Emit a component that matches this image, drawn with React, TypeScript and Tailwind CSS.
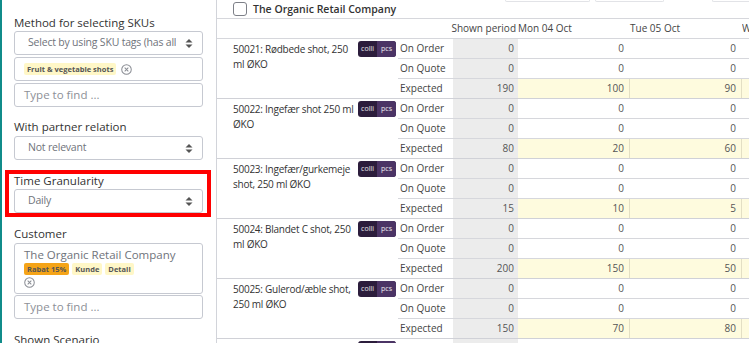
import React from "react";

const groups = [
  { name: ["50021: Rødbede shot, 250", "ml ØKO"], exp: [190, 100, 90] },
  { name: ["50022: Ingefær shot 250 ml", "ØKO"], exp: [80, 20, 60] },
  { name: ["50023: Ingefær/gurkemeje", "shot, 250 ml ØKO"], exp: [15, 10, 5] },
  { name: ["50024: Blandet C shot, 250", "ml ØKO"], exp: [200, 150, 50] },
  { name: ["50025: Gulerod/æble shot,", "250 ml ØKO"], exp: [150, 70, 80] },
  { name: ["50026: Æble/ingefær shot,", "250 ml ØKO"], exp: [120, 60, 60] },
];

function Caret() {
  return (
    <svg width="8" height="11" viewBox="0 0 8 11" className="shrink-0">
      <path d="M4 1 L7.5 4.5 H0.5 Z" fill="#555" />
      <path d="M4 10 L7.5 6.5 H0.5 Z" fill="#555" />
    </svg>
  );
}

function CircleX() {
  return (
    <svg width="11" height="11" viewBox="0 0 12 12" className="shrink-0">
      <circle cx="6" cy="6" r="5.2" fill="none" stroke="#8a8d94" strokeWidth="1.1" />
      <path d="M4 4 L8 8 M8 4 L4 8" stroke="#8a8d94" strokeWidth="1.1" />
    </svg>
  );
}

function Select({ text }: { text: string }) {
  return (
    <div className="h-[24px] border border-[#c6c9d1] rounded-[3px] flex items-center pl-[13px] pr-[9px] gap-[9px]">
      <span className="flex-1 overflow-hidden whitespace-nowrap text-[10.5px] tracking-[-0.2px] text-[#6f737b]">{text}</span>
      <Caret />
    </div>
  );
}

function Finder() {
  return (
    <div className="h-[24px] border border-[#c6c9d1] rounded-[3px] flex items-center pl-[9px] text-[11.5px] text-[#8d9097]">
      Type to find ...
    </div>
  );
}

function Label({ children }: { children: React.ReactNode }) {
  return <div className="text-[11.5px] leading-[14px] text-[#333]">{children}</div>;
}

function Tag({ children, orange }: { children: React.ReactNode; orange?: boolean }) {
  return (
    <span
      className={`px-[3px] h-[12px] leading-[12px] rounded-[2px] text-[7.5px] font-bold text-[#555] ${
        orange ? "bg-[#f5a418]" : "bg-[#fff7c7]"
      }`}
    >
      {children}
    </span>
  );
}

function Sidebar() {
  return (
    <aside className="w-[217px] shrink-0 h-full border-l-2 border-l-[#108c8a] border-r border-r-[#d2d4da] pl-[12px] pr-[13px] pt-[16px] flex flex-col">
      <Label>Method for selecting SKUs</Label>
      <div className="mt-[1px] flex flex-col gap-[2px]">
        <Select text="Select by using SKU tags (has all tags)" />
        <div className="h-[24px] border border-[#c6c9d1] rounded-[3px] flex items-center pl-[9px] gap-[5px]">
          <Tag>Fruit &amp; vegetable shots</Tag>
          <CircleX />
        </div>
        <Finder />
      </div>
      <div className="mt-[13px]">
        <Label>With partner relation</Label>
        <div className="mt-[2px]">
          <Select text="Not relevant" />
        </div>
      </div>
      <div className="mt-[10px] -ml-[9px] -mr-[8px] border-4 border-[#ff0000] pl-[5px] pr-[4px]">
        <Label>Time Granularity</Label>
        <div className="mt-[1px]">
          <Select text="Daily" />
        </div>
      </div>
      <div className="mt-[10px]">
        <Label>Customer</Label>
        <div className="mt-[2px] h-[51px] border border-[#c6c9d1] rounded-[3px] pl-[9px] pt-[3px] flex flex-col">
          <div className="text-[11.5px] leading-[16px] text-[#6f737b]">The Organic Retail Company</div>
          <div className="flex gap-[3px]">
            <Tag orange>Rabat 15%</Tag>
            <Tag>Kunde</Tag>
            <Tag>Detail</Tag>
          </div>
          <div className="mt-[2px]">
            <CircleX />
          </div>
        </div>
        <div className="mt-[1px]">
          <Finder />
        </div>
      </div>
      <div className="mt-[14px]">
        <Label>Shown Scenario</Label>
      </div>
    </aside>
  );
}

function Badge() {
  return (
    <div className="h-[16px] w-[38px] shrink-0 rounded-[3px] bg-[#2c1d3c] flex text-[7px] text-white/90 overflow-hidden">
      <span className="w-[19px] flex items-center justify-center">colli</span>
      <span className="flex-1 bg-[#4b3465] flex items-center justify-center">pcs</span>
    </div>
  );
}

function Row({ label, vals, exp, last }: { label: string; vals: number[]; exp?: boolean; last?: boolean }) {
  return (
    <div className={`flex text-[10px] text-[#555] ${last ? "h-[19px]" : "h-[20px] border-b border-[#d6d7dc]"}`}>
      <div className="w-[55px] pl-[2px] flex items-center text-[#444]">{label}</div>
      <div className="w-[65px] bg-[#ececec] pr-[4px] flex items-center justify-end">{vals[0]}</div>
      <div className={`w-[112px] pr-[5px] flex items-center justify-end border-r ${exp ? "bg-[#fefbde] border-[#e3dfc4]" : "border-transparent"}`}>
        {vals[1]}
      </div>
      <div className={`w-[112px] pr-[5px] flex items-center justify-end border-r ${exp ? "bg-[#fefbde] border-[#e3dfc4]" : "border-transparent"}`}>
        {vals[2]}
      </div>
      <div className={`flex-1 ${exp ? "bg-[#fefbde]" : ""}`}></div>
    </div>
  );
}

function Group({ name, exp }: { name: string[]; exp: number[] }) {
  return (
    <div className="flex border-b border-[#d0d1d7]">
      <div className="w-[181px] shrink-0 pl-[16px] pt-[2px] flex">
        <div className="w-[125px] text-[10px] tracking-[-0.25px] leading-[15px] text-[#333] pt-[1px] whitespace-nowrap">
          <div>{name[0]}</div>
          <div>{name[1]}</div>
        </div>
        <Badge />
      </div>
      <div className="flex-1 flex flex-col">
        <Row label="On Order" vals={[0, 0, 0]} />
        <Row label="On Quote" vals={[0, 0, 0]} />
        <Row label="Expected" vals={exp} exp last />
      </div>
    </div>
  );
}

export default function App() {
  return (
    <div className="w-[749px] h-[343px] overflow-hidden bg-white flex font-['Open_Sans',sans-serif]">
      <Sidebar />
      <main className="flex-1 flex flex-col min-w-0">
        <div className="h-[19px] shrink-0 border-b border-[#d6d7dc] flex items-start">
          <div className="flex items-center gap-[6px] pl-[16px] pt-[2px] w-[288px]">
            <div className="w-[14px] h-[14px] border border-[#7d8088] rounded-[3px]"></div>
            <span className="text-[10.5px] font-semibold text-[#333] leading-[14px]">The Organic Retail Company</span>
          </div>
          <div className="h-[2px] w-[85px] border border-t-0 border-[#e2e3e7] rounded-b-[3px]"></div>
          <div className="h-[2px] w-[69px] ml-[5px] border border-t-0 border-[#e2e3e7] rounded-b-[3px]"></div>
          <div className="h-[2px] flex-1 ml-[48px] border border-t-0 border-r-0 border-[#e2e3e7] rounded-bl-[3px]"></div>
        </div>
        <div className="h-[20px] shrink-0 border-b border-[#d6d7dc] flex text-[10px] text-[#444]">
          <div className="w-[236px]"></div>
          <div className="w-[65px] flex items-center justify-end pr-[2px] whitespace-nowrap">Shown period</div>
          <div className="w-[112px] flex items-center whitespace-nowrap">Mon 04 Oct</div>
          <div className="w-[112px] flex items-center whitespace-nowrap">Tue 05 Oct</div>
          <div className="flex-1 flex items-center whitespace-nowrap overflow-hidden">Wed 06 Oct</div>
        </div>
        {groups.map((g) => (
          <Group key={g.name[0]} name={g.name} exp={g.exp} />
        ))}
      </main>
    </div>
  );
}
